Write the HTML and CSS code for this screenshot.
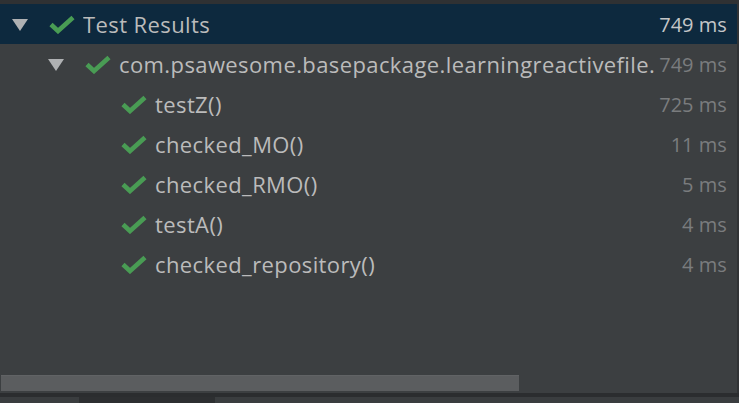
FILE: index.html
```html
<!DOCTYPE html>
<html>
<head>
<meta charset="utf-8">
<link rel="stylesheet" href="styles.css">
</head>
<body>
<div class="window">
  <div class="panel">
    <div class="main">
      <div class="topline"></div>
      <div class="tree">
        <div class="row selected lvl0">
          <span class="arrow"><svg width="16" height="12" viewBox="0 0 16 12"><polygon points="0,0 16,0 8,12" fill="#afb1b3"/></svg></span>
          <span class="check"><svg width="26" height="19" viewBox="0 0 26 19"><polyline points="2,9.5 9,16 24,2.5" fill="none" stroke="#499c54" stroke-width="4.6"/></svg></span>
          <span class="name">Test Results</span>
          <span class="time">749 ms</span>
        </div>
        <div class="row lvl1">
          <span class="arrow"><svg width="16" height="12" viewBox="0 0 16 12"><polygon points="0,0 16,0 8,12" fill="#afb1b3"/></svg></span>
          <span class="check"><svg width="26" height="19" viewBox="0 0 26 19"><polyline points="2,9.5 9,16 24,2.5" fill="none" stroke="#499c54" stroke-width="4.6"/></svg></span>
          <span class="name">com.psawesome.basepackage.learningreactivefile.</span>
          <span class="time">749 ms</span>
        </div>
        <div class="row lvl2">
          <span class="check"><svg width="26" height="19" viewBox="0 0 26 19"><polyline points="2,9.5 9,16 24,2.5" fill="none" stroke="#499c54" stroke-width="4.6"/></svg></span>
          <span class="name">testZ()</span>
          <span class="time">725 ms</span>
        </div>
        <div class="row lvl2">
          <span class="check"><svg width="26" height="19" viewBox="0 0 26 19"><polyline points="2,9.5 9,16 24,2.5" fill="none" stroke="#499c54" stroke-width="4.6"/></svg></span>
          <span class="name">checked_MO()</span>
          <span class="time">11 ms</span>
        </div>
        <div class="row lvl2">
          <span class="check"><svg width="26" height="19" viewBox="0 0 26 19"><polyline points="2,9.5 9,16 24,2.5" fill="none" stroke="#499c54" stroke-width="4.6"/></svg></span>
          <span class="name">checked_RMO()</span>
          <span class="time">5 ms</span>
        </div>
        <div class="row lvl2">
          <span class="check"><svg width="26" height="19" viewBox="0 0 26 19"><polyline points="2,9.5 9,16 24,2.5" fill="none" stroke="#499c54" stroke-width="4.6"/></svg></span>
          <span class="name">testA()</span>
          <span class="time">4 ms</span>
        </div>
        <div class="row lvl2">
          <span class="check"><svg width="26" height="19" viewBox="0 0 26 19"><polyline points="2,9.5 9,16 24,2.5" fill="none" stroke="#499c54" stroke-width="4.6"/></svg></span>
          <span class="name">checked_repository()</span>
          <span class="time">4 ms</span>
        </div>
      </div>
      <div class="hscroll"><div class="thumb"></div></div>
    </div>
    <div class="rightedge"></div>
  </div>
  <div class="divider"></div>
  <div class="tabs">
    <div class="tab"></div>
    <div class="tab active"></div>
    <div class="tab rest"></div>
  </div>
</div>
</body>
</html>
```

FILE: styles.css
```css
html, body {
  margin: 0;
  padding: 0;
  background: #3c3f41;
}
body {
  width: 739px;
  height: 403px;
  overflow: hidden;
  font-family: "Open Sans", "Noto Sans", sans-serif;
}
.window {
  display: flex;
  flex-direction: column;
  height: 403px;
}
.panel {
  display: flex;
  flex-direction: row;
  height: 393px;
}
.main {
  flex: 1;
  display: flex;
  flex-direction: column;
  background: #3c3f41;
}
.topline {
  height: 4px;
  background: #2f3133;
}
.tree {
  flex: 1;
}
.row {
  height: 40px;
  display: flex;
  align-items: center;
  color: #bbbbbb;
  font-size: 22px;
  letter-spacing: 0.4px;
  padding-right: 10px;
}
.row.selected {
  background: #0d293e;
}
.lvl0 { padding-left: 12px; }
.lvl1 { padding-left: 48px; }
.lvl2 { padding-left: 121px; }
.arrow {
  display: flex;
  width: 16px;
  height: 12px;
  margin-right: 21px;
  margin-top: 1px;
}
.check {
  display: flex;
  width: 26px;
  height: 19px;
  margin-right: 8px;
}
.name {
  flex: 1;
  white-space: nowrap;
  overflow: hidden;
  line-height: 40px;
}
.time {
  color: #7a7c7e;
  font-size: 20px;
  letter-spacing: 0;
  white-space: nowrap;
  margin-left: 4px;
}
.selected .time {
  color: #c4c6c8;
}
.hscroll {
  height: 17px;
  padding-left: 1px;
  display: flex;
  margin-bottom: 1px;
}
.thumb {
  width: 518px;
  height: 16px;
  background: #5b5d5f;
  border-top: 1px solid #616365;
  box-sizing: border-box;
}
.rightedge {
  width: 4px;
  background: #313335;
}
.divider {
  height: 4px;
  background: #2b2d2f;
}
.tabs {
  flex: 1;
  display: flex;
}
.tab {
  width: 79px;
  background: #3a3d3f;
}
.tab.active {
  width: 136px;
  background: #2d2f31;
}
.tab.rest {
  flex: 1;
  background: #3a3d3f;
}
```
